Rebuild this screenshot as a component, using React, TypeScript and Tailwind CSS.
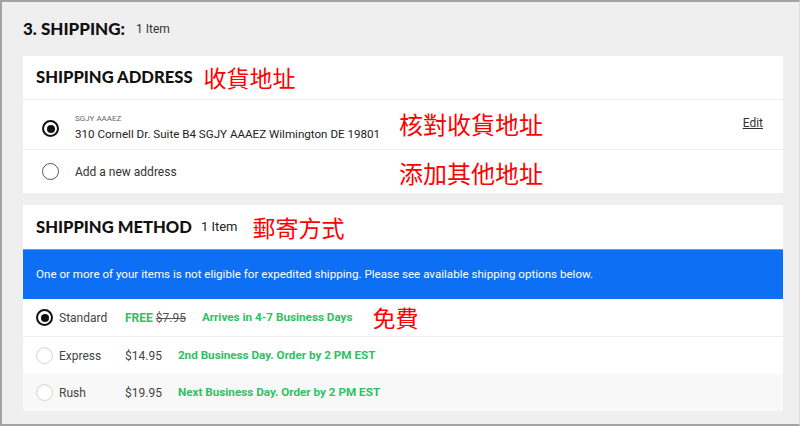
import React from 'react';

const heading = "font-['Lato','Liberation_Sans',sans-serif]";
const body = "font-['Roboto','Liberation_Sans',sans-serif]";
const cjk = "font-['Noto_Sans_CJK_TC','Noto_Sans_CJK_SC',sans-serif] text-[#ff0000]";

const Radio = ({ checked, muted }: { checked?: boolean; muted?: boolean }) => (
  <span
    className={
      checked
        ? 'flex h-[17px] w-[17px] shrink-0 items-center justify-center rounded-full border-2 border-[#111]'
        : muted
          ? 'h-[17px] w-[17px] shrink-0 rounded-full border border-[#d6d6d6] bg-white shadow-[inset_0_1px_2px_rgba(0,0,0,0.08)]'
          : 'h-[17px] w-[17px] shrink-0 rounded-full border border-[#555]'
    }
  >
    {checked && <span className="h-[8px] w-[8px] rounded-full bg-[#111]" />}
  </span>
);

interface MethodRowProps {
  name: string;
  price: React.ReactNode;
  detail: string;
  checked?: boolean;
  note?: string;
  className?: string;
}

const MethodRow = ({ name, price, detail, checked, note, className }: MethodRowProps) => (
  <div className={`flex items-center whitespace-nowrap pl-[13px] ${className ?? ''}`}>
    <Radio checked={checked} muted={!checked} />
    <span className="ml-[6px] w-[66px] text-[12px] text-[#444]">{name}</span>
    <span className="text-[12px] text-[#444]">{price}</span>
    <span className="ml-[16px] text-[11.7px] font-bold text-[#2fc063]">{detail}</span>
    {note && <span className={`ml-[20px] text-[23px] leading-none ${cjk}`}>{note}</span>}
  </div>
);

export default function App() {
  return (
    <div
      className={`box-border h-[426px] w-[800px] overflow-hidden border-t-2 border-b-2 border-l-2 border-r border-t-[#a3a3a3] border-b-[#a3a3a3] border-l-[#a3a3a3] border-r-[#dcdcdc] bg-[#efefef] pl-[21px] pr-[16px] pt-[15px] ${body}`}
    >
      {/* Section title */}
      <div className="mb-[15px] flex h-[24px] items-center">
        <h2 className={`text-[17px] font-black text-[#111] ${heading}`}>3. SHIPPING:</h2>
        <span className="ml-[11px] text-[12px] text-[#333]">1 Item</span>
      </div>

      {/* Shipping address */}
      <div className="bg-white">
        <div className="flex h-[44px] items-center border-b border-[#eeeeee] pl-[13px]">
          <h3 className={`text-[16.6px] font-black text-[#111] ${heading}`}>SHIPPING ADDRESS</h3>
          <span className={`ml-[11px] text-[23px] leading-none ${cjk}`}>收貨地址</span>
        </div>
        <div className="flex h-[50px] items-center border-b border-[#eeeeee] pl-[19px] pr-[20px] pt-[8px]">
          <Radio checked />
          <div className="ml-[16px] -mt-[2px] flex w-[308px] flex-col whitespace-nowrap">
            <span className="text-[8px] leading-[10px] text-[#666]">SGJY AAAEZ</span>
            <span className="mt-[3px] text-[11.6px] leading-[14px] text-[#222]">
              310 Cornell Dr. Suite B4 SGJY AAAEZ Wilmington DE 19801
            </span>
          </div>
          <span className={`ml-[16px] -mt-[10px] text-[24px] leading-none ${cjk}`}>核對收貨地址</span>
          <a className="ml-auto -mt-[12px] text-[12px] text-[#333] underline">Edit</a>
        </div>
        <div className="flex h-[43px] items-center pl-[19px]">
          <Radio />
          <span className="ml-[16px] w-[308px] text-[12px] text-[#333]">Add a new address</span>
          <span className={`ml-[16px] mt-[3px] text-[24px] leading-none ${cjk}`}>添加其他地址</span>
        </div>
      </div>

      {/* Shipping method */}
      <div className="mt-[12px] bg-white">
        <div className="flex h-[44px] items-center pl-[13px]">
          <h3 className={`text-[16.6px] font-black text-[#111] ${heading}`}>SHIPPING METHOD</h3>
          <span className="ml-[9px] text-[13px] text-[#222]">1 Item</span>
          <span className={`ml-[15px] text-[23px] leading-none ${cjk}`}>郵寄方式</span>
        </div>
        <div className="flex h-[50px] items-center whitespace-nowrap border-t border-[#5a9ff7] bg-[#0d6ff4] pl-[13px] text-[11.6px] text-white">
          One or more of your items is not eligible for expedited shipping. Please see available shipping options below.
        </div>
        <MethodRow
          className="h-[38px] border-b border-[#eeeeee]"
          checked
          name="Standard"
          price={
            <>
              <span className="font-bold text-[#2fc063]">FREE</span>{' '}
              <span className="text-[#555] line-through">$7.95</span>
            </>
          }
          detail="Arrives in 4-7 Business Days"
          note="免費"
        />
        <MethodRow className="h-[37px]" name="Express" price="$14.95" detail="2nd Business Day. Order by 2 PM EST" />
        <MethodRow
          className="h-[37px] bg-[#f8f8f8]"
          name="Rush"
          price="$19.95"
          detail="Next Business Day. Order by 2 PM EST"
        />
      </div>
    </div>
  );
}
